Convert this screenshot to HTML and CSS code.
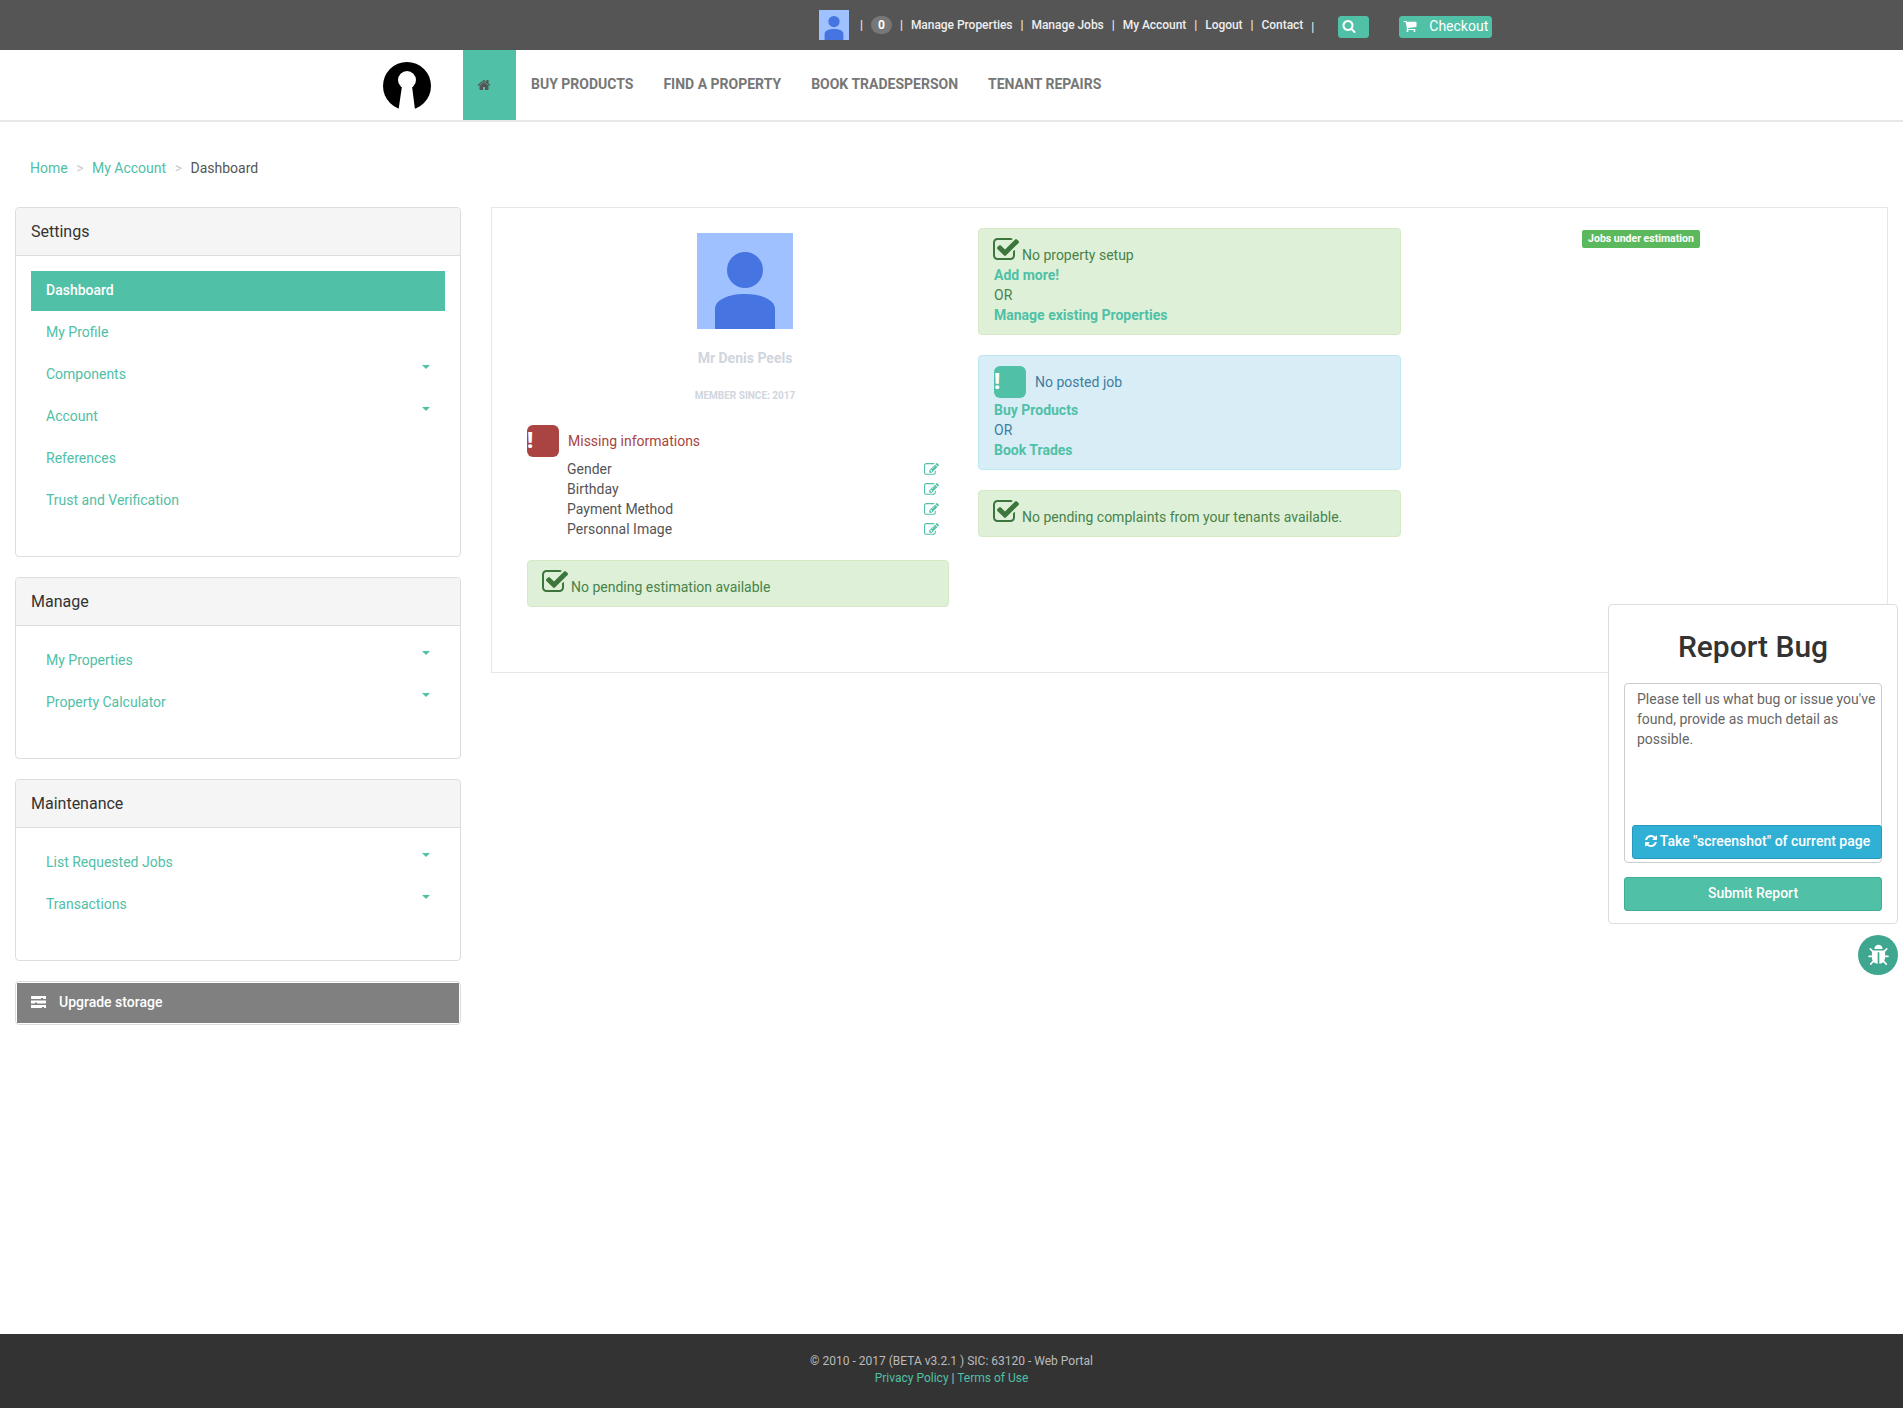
FILE: index.html
```html
<!DOCTYPE html>
<html lang="en">
<head>
  <meta charset="UTF-8" />
  <meta name="viewport" content="width=device-width, initial-scale=1" />
  <title>Dashboard</title>
  <link rel="stylesheet" href="styles.css">
</head>
<body>

  <svg class="icon-defs" width="0" height="0">
    <symbol id="i-home" viewBox="0 0 1792 1792"><path d="M1472 992v480q0 26-19 45t-45 19h-384v-384H768v384H384q-26 0-45-19t-19-45V992q0-1 .5-3t.5-3l575-474 575 474q1 2 1 6zm223-69l-62 74q-8 9-21 11h-3q-13 0-21-7L896 424l-692 577q-12 8-24 7-13-2-21-11l-62-74q-8-10-7-23.5t11-21.5l719-599q32-26 76-26t76 26l244 204V288q0-14 9-23t23-9h192q14 0 23 9t9 23v408l219 182q10 8 11 21.5t-7 23.5z"/></symbol>
    <symbol id="i-search" viewBox="0 0 1792 1792"><path d="M1216 832q0-185-131.500-316.500T768 384 451.500 515.500 320 832t131.500 316.500T768 1280t316.500-131.500T1216 832zm512 832q0 52-38 90t-90 38q-54 0-90-38l-343-342q-179 124-399 124-143 0-273.500-55.500t-225-150-150-225T64 832t55.500-273.500 150-225 225-150T768 128t273.500 55.500 225 150 150 225T1472 832q0 220-124 399l343 343q37 37 37 90z"/></symbol>
    <symbol id="i-cart" viewBox="0 0 1792 1792"><path d="M704 1536q0 52-38 90t-90 38-90-38-38-90 38-90 90-38 90 38 38 90zm896 0q0 52-38 90t-90 38-90-38-38-90 38-90 90-38 90 38 38 90zm128-1088v512q0 24-16.500 42.500T1671 1024L627 1146q13 60 13 70 0 16-24 64h920q26 0 45 19t19 45-19 45-45 19H512q-26 0-45-19t-19-45q0-11 8-31.500t16-36 21.500-40T509 1207L332 384H128q-26 0-45-19t-19-45 19-45 45-19h256q16 0 28.500 6.500T432 285t8 22.500 5 26.500 5 22h1214q26 0 45 19t19 45z"/></symbol>
    <symbol id="i-check" viewBox="0 0 1792 1792"><path d="M1472 930v318q0 119-84.500 203.500T1184 1536H352q-119 0-203.500-84.500T64 1248V416q0-119 84.500-203.500T352 128h832q63 0 117 25 15 7 18 23 3 17-9 29l-49 49q-10 10-23 10-3 0-9-2-23-6-45-6H352q-66 0-113 47t-47 113v832q0 66 47 113t113 47h832q66 0 113-47t47-113V994q0-13 9-22l64-64q10-10 23-10 6 0 12 3 20 8 20 29zm231-489l-814 814q-24 24-57 24t-57-24L345 825q-24-24-24-57t24-57l110-110q24-24 57-24t57 24l263 263 647-647q24-24 57-24t57 24l110 110q24 24 24 57t-24 57z"/></symbol>
    <symbol id="i-edit" viewBox="0 0 1792 1792"><path d="M888 1184l116-116-152-152-116 116v56h96v96h56zm440-720q-16-16-33 1L945 815q-17 17-1 33t33-1l350-350q17-17 1-33zm80 594v190q0 119-84.500 203.500T1120 1536H288q-119 0-203.500-84.500T0 1248V416q0-119 84.500-203.500T288 128h832q63 0 117 25 15 7 18 23 3 17-9 29l-49 49q-14 14-32 8-23-6-45-6H288q-66 0-113 47t-47 113v832q0 66 47 113t113 47h832q66 0 113-47t47-113v-126q0-13 9-22l64-64q15-15 35-7t20 29zm-96-738l288 288-672 672H640V992zm444 132l-92 92-288-288 92-92q27-27 68-27t68 27l152 152q27 27 27 68t-27 68z"/></symbol>
    <symbol id="i-refresh" viewBox="0 0 1792 1792"><path d="M1639 1056q0 5-1 7-64 268-268 434.500T892 1664q-146 0-282.500-55T366 1452l-129 129q-19 19-45 19t-45-19-19-45v-448q0-26 19-45t45-19h448q26 0 45 19t19 45-19 45l-137 137q71 66 161 102t187 36q134 0 250-65t186-179q11-17 53-117 8-23 30-23h192q13 0 22.500 9.500t9.500 22.500zm25-800v448q0 26-19 45t-45 19h-448q-26 0-45-19t-19-45 19-45l138-138q-148-137-349-137-134 0-250 65T460 628q-11 17-53 117-8 23-30 23H178q-13 0-22.500-9.500T146 736v-7q65-268 270-434.500T896 128q146 0 284 55.500T1425 340l130-129q19-19 45-19t45 19 19 45z"/></symbol>
    <symbol id="i-bug" viewBox="0 0 1792 1792"><path d="M1696 960q0 26-19 45t-45 19h-224q0 171-67 290l208 209q19 19 19 45t-19 45q-18 19-45 19t-45-19l-198-197q-5 5-15 13t-42 28.500-65 36.500-82 29-97 13V640H832v896q-51 0-101.500-13.500T643 1490t-66-37-43-32l-15-14-183 207q-20 21-48 21-24 0-43-16-19-18-20.500-44.500T240 1527l202-227q-58-114-58-276H160q-26 0-45-19t-19-45 19-45 45-19h224V602L211 429q-19-19-19-45t19-45 45-19 45 19l173 173h844l173-173q19-19 45-19t45 19 19 45-19 45l-173 173v294h224q26 0 45 19t19 45zm-480-576H576q0-133 93.500-226.500T896 64t226.500 93.500T1216 384z"/></symbol>
    <symbol id="i-avatar" viewBox="0 0 96 96"><rect width="96" height="96" fill="#a0c1ff"/><circle cx="48" cy="37" r="18" fill="#4674e0"/><path d="M18 96V76c0-9 13-15 30-15s30 6 30 15v20z" fill="#4674e0"/></symbol>
  </svg>

  <div class="topbar">
    <svg class="topbar-avatar"><use href="#i-avatar"/></svg>
    <span class="sep">|</span>
    <span class="count">0</span>
    <span class="sep">|</span>
    <a href="#">Manage Properties</a>
    <span class="sep">|</span>
    <a href="#">Manage Jobs</a>
    <span class="sep">|</span>
    <a href="#">My Account</a>
    <span class="sep">|</span>
    <a href="#">Logout</a>
    <span class="sep">|</span>
    <a href="#">Contact</a>
    <span class="sep sep-low">|</span>
    <button class="btn-top btn-search"><svg class="icon-14"><use href="#i-search"/></svg></button>
    <button class="btn-top btn-checkout"><svg class="icon-14"><use href="#i-cart"/></svg>Checkout</button>
  </div>

  <div class="navbar">
    <svg class="logo" viewBox="0 0 48 48">
      <circle cx="24" cy="24" r="24" fill="#000"/>
      <circle cx="24" cy="18" r="9" fill="#fff"/>
      <path d="M19 24h10l3 24H15.500z" fill="#fff"/>
    </svg>
    <a class="nav-home" href="#"><svg class="icon-14"><use href="#i-home"/></svg></a>
    <a class="nav-link" href="#">BUY PRODUCTS</a>
    <a class="nav-link" href="#">FIND A PROPERTY</a>
    <a class="nav-link" href="#">BOOK TRADESPERSON</a>
    <a class="nav-link" href="#">TENANT REPAIRS</a>
  </div>

  <div class="breadcrumb">
    <a href="#">Home</a><span class="crumb-sep">&gt;</span><a href="#">My Account</a><span class="crumb-sep">&gt;</span><span>Dashboard</span>
  </div>

  <div class="content">
    <div class="sidebar">
      <div class="panel">
        <div class="panel-head">Settings</div>
        <div class="panel-body">
          <a class="side-item active" href="#">Dashboard</a>
          <a class="side-item" href="#">My Profile</a>
          <a class="side-item" href="#">Components<i class="caret"></i></a>
          <a class="side-item" href="#">Account<i class="caret"></i></a>
          <a class="side-item" href="#">References</a>
          <a class="side-item" href="#">Trust and Verification</a>
        </div>
      </div>
      <div class="panel">
        <div class="panel-head">Manage</div>
        <div class="panel-body">
          <a class="side-item" href="#">My Properties<i class="caret"></i></a>
          <a class="side-item" href="#">Property Calculator<i class="caret"></i></a>
        </div>
      </div>
      <div class="panel">
        <div class="panel-head">Maintenance</div>
        <div class="panel-body">
          <a class="side-item" href="#">List Requested Jobs<i class="caret"></i></a>
          <a class="side-item" href="#">Transactions<i class="caret"></i></a>
        </div>
      </div>
      <div class="upgrade">
        <a href="#">
          <svg class="upgrade-icon" viewBox="0 0 15 12"><path d="M0 0h15v3h-3v-1h-2v1H0zM0 4.500h15v3H6v-1H4v1H0zM0 9h15v3h-2v-1h-2v1H0z" fill="#fff"/></svg>
          Upgrade storage
        </a>
      </div>
    </div>

    <div class="main-panel">
      <div class="col-profile">
        <div class="profile">
          <svg class="profile-avatar"><use href="#i-avatar"/></svg>
          <div class="profile-name">Mr Denis Peels</div>
          <div class="profile-since">MEMBER SINCE: 2017</div>
        </div>
        <div class="missing-head">
          <span class="mark mark-red">!</span>
          <span>Missing informations</span>
        </div>
        <ul class="missing-list">
          <li>Gender<svg class="icon-edit"><use href="#i-edit"/></svg></li>
          <li>Birthday<svg class="icon-edit"><use href="#i-edit"/></svg></li>
          <li>Payment Method<svg class="icon-edit"><use href="#i-edit"/></svg></li>
          <li>Personnal Image<svg class="icon-edit"><use href="#i-edit"/></svg></li>
        </ul>
        <div class="alert alert-success">
          <svg class="icon-check"><use href="#i-check"/></svg> No pending estimation available
        </div>
      </div>

      <div class="col-alerts">
        <div class="alert alert-success">
          <svg class="icon-check"><use href="#i-check"/></svg> No property setup<br>
          <a href="#">Add more!</a><br>
          OR<br>
          <a href="#">Manage existing Properties</a>
        </div>
        <div class="alert alert-info">
          <div class="alert-title"><span class="mark mark-teal">!</span>No posted job</div>
          <a href="#">Buy Products</a><br>
          OR<br>
          <a href="#">Book Trades</a>
        </div>
        <div class="alert alert-success">
          <svg class="icon-check"><use href="#i-check"/></svg> No pending complaints from your tenants available.
        </div>
      </div>

      <div class="col-label">
        <span class="label">Jobs under estimation</span>
      </div>
    </div>
  </div>

  <div class="footer">
    &copy; 2010 - 2017 (BETA v3.2.1 ) SIC: 63120 - Web Portal<br>
    <a href="#">Privacy Policy</a> | <a href="#">Terms of Use</a>
  </div>

  <div class="bug-box">
    <h2>Report Bug</h2>
    <div class="bug-field">
      <p>Please tell us what bug or issue you've found, provide as much detail as possible.</p>
      <button class="btn-shot"><svg class="icon-14"><use href="#i-refresh"/></svg>Take "screenshot" of current page</button>
    </div>
    <button class="btn-submit">Submit Report</button>
  </div>
  <div class="bug-toggle"><svg><use href="#i-bug"/></svg></div>

</body>
</html>
```

FILE: styles.css
```css
* {
  box-sizing: border-box;
}
body {
  margin: 0;
  min-height: 1408px;
  display: flex;
  flex-direction: column;
  position: relative;
  font-family: 'Roboto', 'Liberation Sans', sans-serif;
  font-size: 14px;
  line-height: 20px;
  color: #555;
  background-color: #fff;
}
a {
  color: #50c0a6;
  text-decoration: none;
}
.icon-defs {
  position: absolute;
}
.icon-14 {
  width: 14px;
  height: 14px;
  fill: currentColor;
}

/* top bar */
.topbar {
  height: 50px;
  padding-left: 819px;
  display: flex;
  align-items: center;
  gap: 8px;
  background-color: #555;
  color: #eee;
  font-size: 12px;
  font-weight: 500;
  letter-spacing: -0.04px;
}
.topbar a {
  margin-bottom: 1px;
  color: #eee;
}
.topbar-avatar {
  width: 30px;
  height: 30px;
  margin-right: 3px;
}
.count {
  width: 21px;
  height: 18px;
  line-height: 18px;
  border-radius: 9px;
  text-align: center;
  font-weight: 700;
  color: #fff;
  background-color: #777;
}
.sep-low {
  padding-top: 3px;
}
.btn-top {
  height: 22px;
  margin-top: 4px;
  padding: 0 0 2px;
  display: flex;
  align-items: center;
  border: 1px solid #50c0a6;
  border-radius: 3px;
  background-color: #50c0a6;
  color: #fff;
  font-family: inherit;
  font-size: 14px;
}
.btn-search {
  width: 31px;
  margin-left: 16px;
  padding-left: 3px;
}
.btn-checkout {
  width: 93px;
  margin-left: 22px;
  padding-left: 3px;
  gap: 12px;
}

/* nav */
.navbar {
  height: 72px;
  padding: 0 0 2px 383px;
  display: flex;
  border-bottom: 2px solid #e7e7e7;
  background-color: #fff;
}
.logo {
  width: 48px;
  height: 48px;
  margin: 12px 32px 0 0;
}
.nav-home {
  width: 53px;
  padding-right: 11px;
  display: flex;
  align-items: center;
  justify-content: center;
  margin-bottom: -2px;
  color: #555;
  background-color: #50c0a6;
}
.nav-link {
  padding: 0 15px;
  line-height: 68px;
  font-weight: 700;
  color: #777;
}

.breadcrumb {
  padding: 36px 30px 0;
  height: 85px;
}
.crumb-sep {
  margin: 0 8.5px;
  color: #ccc;
}

/* page */
.content {
  padding: 0 15px;
  display: flex;
  gap: 30px;
  align-items: flex-start;
}
.sidebar {
  width: 446px;
  flex-shrink: 0;
}
.panel {
  margin-bottom: 20px;
  border: 1px solid #ddd;
  border-radius: 4px;
}
.panel-head {
  height: 48px;
  padding: 0 15px;
  line-height: 47px;
  font-size: 16px;
  color: #333;
  background-color: #f5f5f5;
  border-bottom: 1px solid #ddd;
  border-radius: 4px 4px 0 0;
}
.panel-body {
  padding: 15px 15px 33px;
}
.side-item {
  height: 40px;
  margin-bottom: 2px;
  padding: 0 15px 2px;
  display: flex;
  align-items: center;
  justify-content: space-between;
}
.side-item.active {
  color: #fff;
  font-weight: 500;
  background-color: #50c0a6;
}
.caret {
  width: 0;
  height: 0;
  margin-bottom: 14px;
  border-top: 4px solid #50c0a6;
  border-left: 4px solid transparent;
  border-right: 4px solid transparent;
}
.upgrade {
  padding: 1px;
  border: 1px solid #ddd;
  border-radius: 4px;
}
.upgrade a {
  height: 40px;
  padding: 0 0 2px 14px;
  display: flex;
  align-items: center;
  gap: 13px;
  color: #fff;
  font-weight: 500;
  background-color: #808080;
}
.upgrade-icon {
  width: 15px;
  height: 12px;
}

.main-panel {
  flex: 1;
  height: 466px;
  padding: 20px 0 0 35px;
  display: flex;
  gap: 29px;
  border: 1px solid #e7e7e7;
}
.col-profile {
  width: 422px;
  padding-top: 5px;
}
.col-alerts {
  width: 423px;
}
.col-label {
  margin-left: 152px;
  padding-top: 2px;
}
.profile {
  padding-left: 14px;
  text-align: center;
}
.profile-avatar {
  width: 96px;
  height: 96px;
  display: block;
  margin: 0 auto;
}
.profile-name {
  margin-top: 19px;
  font-weight: 700;
  color: #d0d5de;
}
.profile-since {
  margin-top: 18px;
  font-size: 10px;
  font-weight: 700;
  color: #d0d5de;
}
.missing-head {
  margin-top: 19px;
  display: flex;
  align-items: center;
  gap: 9px;
  color: #a94442;
}
.mark {
  width: 32px;
  height: 32px;
  flex-shrink: 0;
  border-radius: 6px;
  color: #fff;
  font-size: 22px;
  font-weight: 900;
  line-height: 31px;
}
.mark-red {
  background-color: #a94442;
}
.mark-teal {
  background-color: #50c0a6;
}
.missing-list {
  margin: 2px 0 0;
  padding: 0 10px 0 40px;
  list-style: none;
}
.missing-list li {
  height: 20px;
  display: flex;
  align-items: center;
  justify-content: space-between;
}
.icon-edit {
  width: 15px;
  height: 15px;
  fill: #50c0a6;
}

.alert {
  margin-bottom: 20px;
  padding: 10px 15px 9px;
  border: 1px solid transparent;
  border-radius: 4px;
}
.alert a {
  font-weight: 700;
}
.alert-success {
  color: #47834a;
  background-color: #dff0d8;
  border-color: #d6e9c6;
}
.alert-info {
  color: #3d7ea0;
  background-color: #d9edf7;
  border-color: #bce8f1;
}
.col-profile .alert {
  margin-top: 21px;
}
.alert-title {
  margin-bottom: 2px;
  display: flex;
  align-items: center;
  gap: 9px;
}
.icon-check {
  width: 28px;
  height: 28px;
  margin: -3px -1.5px 1px -2px;
  fill: #3c763d;
  vertical-align: bottom;
}
.label {
  display: block;
  width: 118px;
  height: 18px;
  border-radius: 2px;
  text-align: center;
  line-height: 17px;
  font-size: 10.5px;
  font-weight: 700;
  color: #fff;
  background-color: #5cb85c;
}

.footer {
  height: 74px;
  margin-top: auto;
  padding-top: 19px;
  text-align: center;
  font-size: 12px;
  line-height: 17px;
  color: #bbb;
  background-color: #333;
}

/* report bug widget */
.bug-box {
  position: absolute;
  left: 1608px;
  top: 604px;
  width: 290px;
  height: 320px;
  padding: 0 15px;
  border: 1px solid #ddd;
  border-radius: 4px;
  background-color: #fff;
}
.bug-box h2 {
  margin: 25px 0 20px;
  text-align: center;
  font-size: 30px;
  line-height: 33px;
  font-weight: 500;
  color: #333;
}
.bug-field {
  height: 180px;
  padding: 5px 0 3px 12px;
  display: flex;
  flex-direction: column;
  justify-content: space-between;
  border: 1px solid #ccc;
  border-radius: 4px;
}
.bug-field p {
  margin: 0;
  color: #666;
}
.btn-shot {
  height: 34px;
  margin: 0 -1px 0 -5px;
  padding: 0 0 2px;
  display: flex;
  align-items: center;
  justify-content: center;
  gap: 2px;
  border: 1px solid #269abc;
  border-radius: 3px;
  color: #fff;
  font-family: inherit;
  font-size: 14px;
  font-weight: 500;
  background-color: #31b0d5;
}
.btn-submit {
  width: 100%;
  height: 34px;
  margin-top: 14px;
  padding: 0 0 2px;
  border: 1px solid #43ac94;
  border-radius: 3px;
  color: #fff;
  font-family: inherit;
  font-size: 14px;
  font-weight: 500;
  background-color: #50c0a6;
}
.bug-toggle {
  position: absolute;
  left: 1858px;
  top: 935px;
  width: 40px;
  height: 40px;
  padding: 8.5px;
  border-radius: 50%;
  background-color: #3fa68f;
}
.bug-toggle svg {
  display: block;
  width: 23px;
  height: 23px;
  fill: #fff;
}
```
